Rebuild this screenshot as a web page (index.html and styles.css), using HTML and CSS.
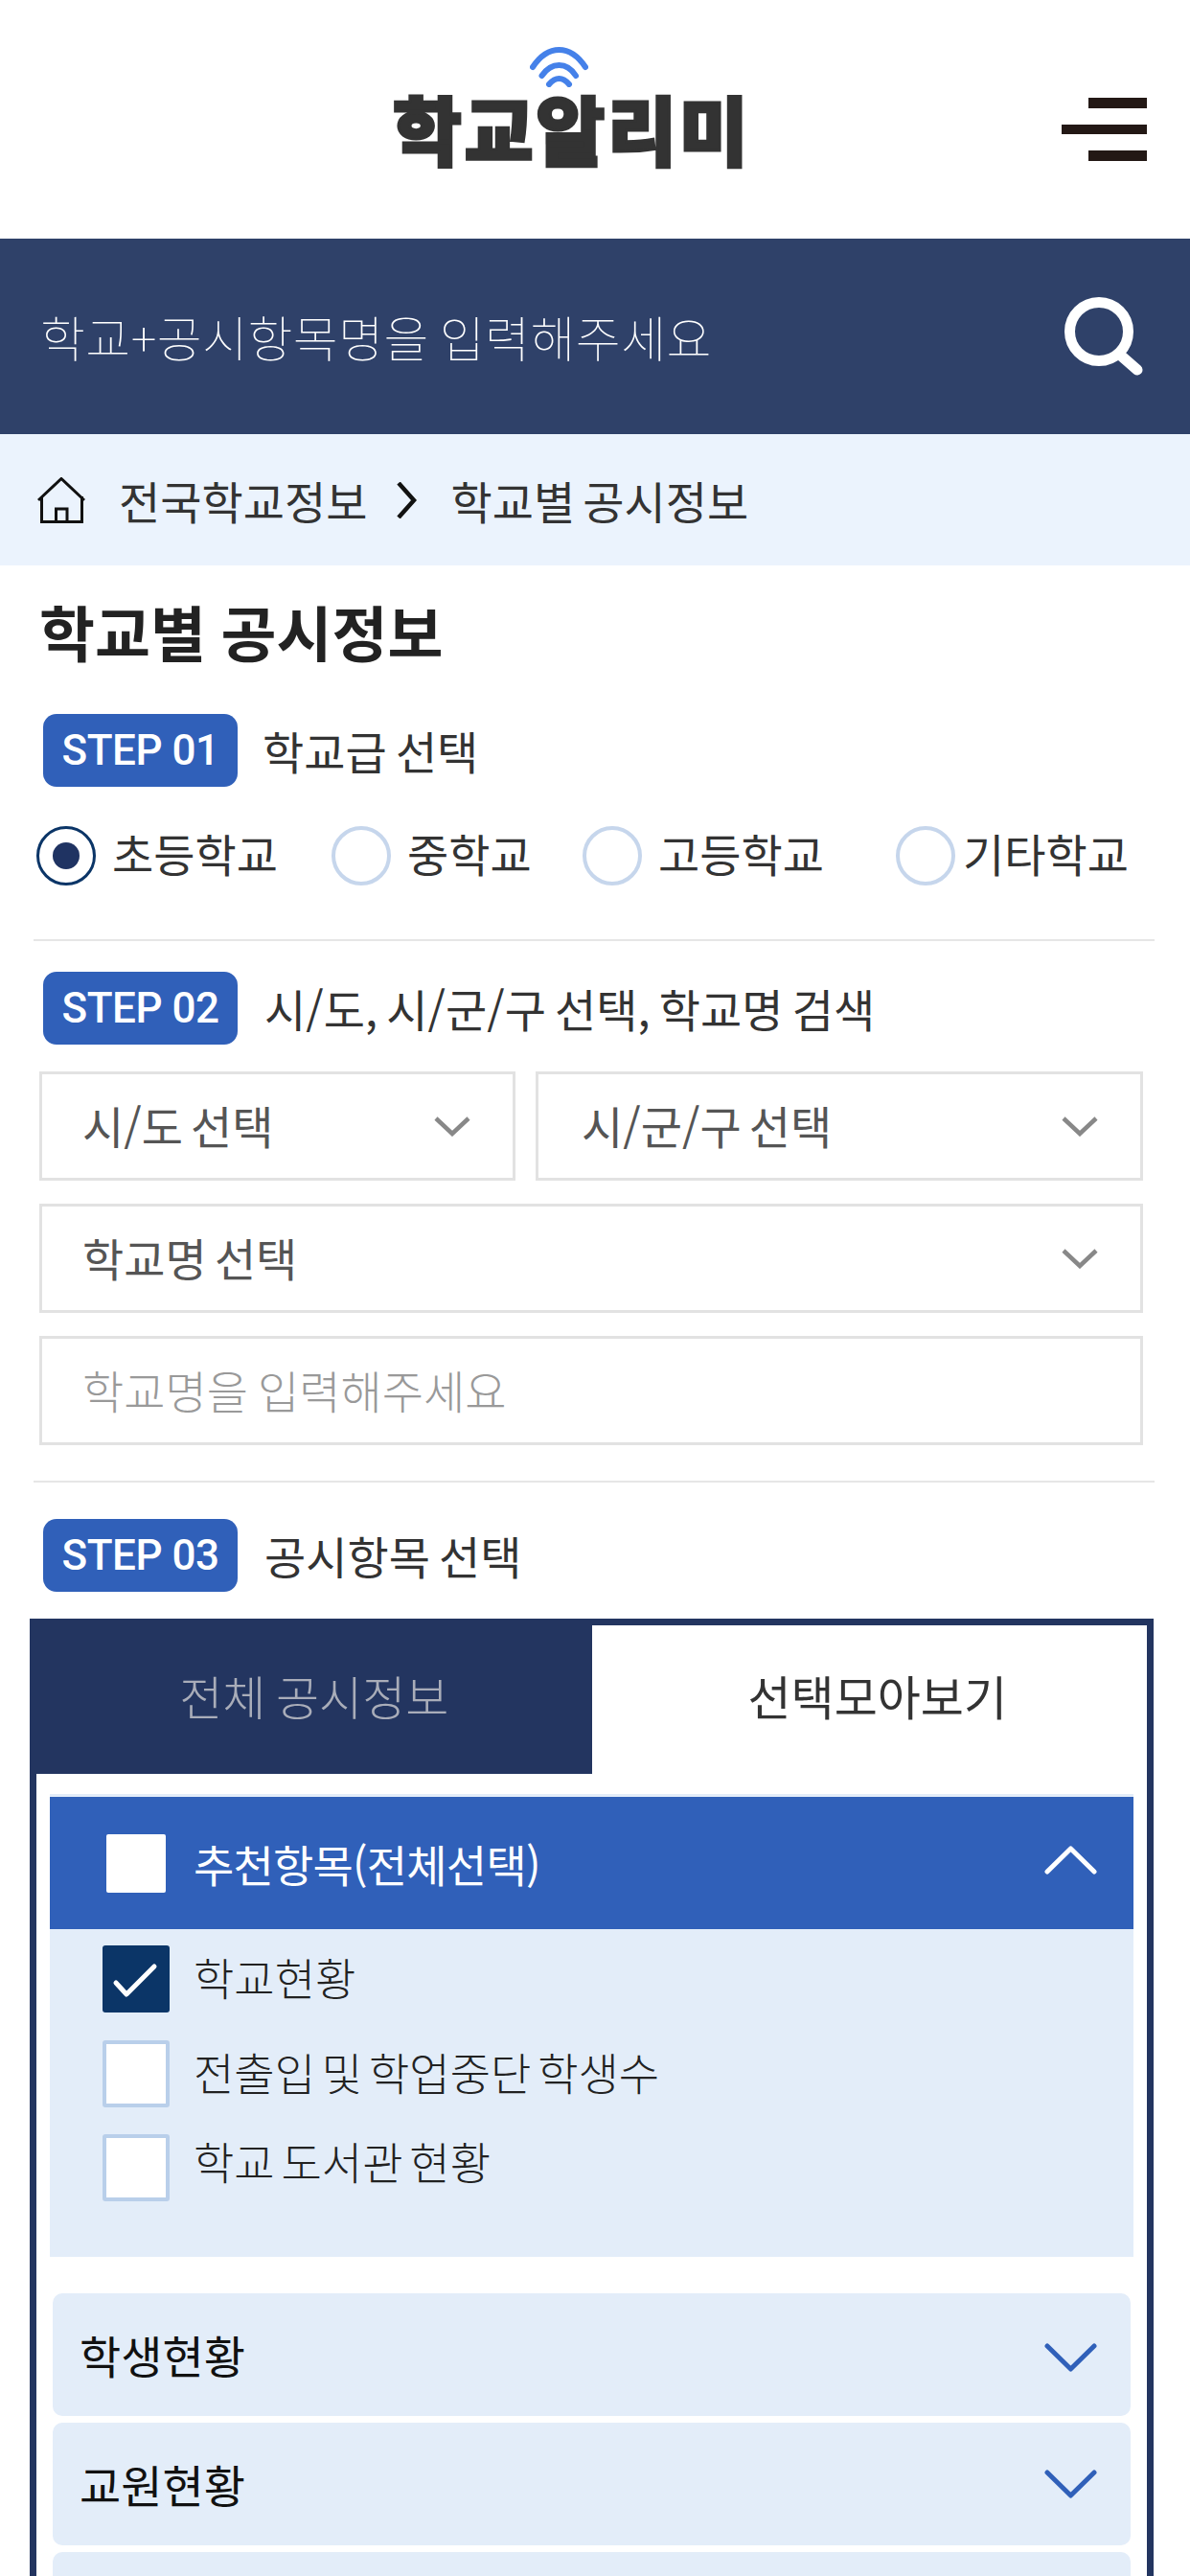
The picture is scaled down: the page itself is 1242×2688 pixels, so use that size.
FILE: index.html
```html
<!DOCTYPE html>
<html lang="ko">
<head>
<meta charset="utf-8">
<title>학교알리미</title>
<link rel="stylesheet" href="styles.css">
</head>
<body>
<div class="page">
  <header class="header">
    <div class="logo">
      <svg class="wifi" width="61" height="42" viewBox="0 0 61 42" fill="none" stroke="#4581e9" stroke-width="6" stroke-linecap="round">
        <path d="M3 21Q15 3 30.5 3Q46 3 58 21"/>
        <path d="M12.500 30Q20 19 30.500 19Q41 19 48 30"/>
        <path d="M20 39Q25 33 30.500 33Q36 33 41 39"/>
      </svg>
      <span class="logo-text">학교알리미</span>
    </div>
    <div class="menu"><i class="bar"></i><i class="bar bar-long"></i><i class="bar"></i></div>
  </header>

  <div class="search">
    <span class="search-text">학교+공시항목명을 입력해주세요</span>
    <svg class="search-icon" width="82" height="82" viewBox="0 0 82 82" fill="none" stroke="#fff" stroke-width="11" stroke-linecap="round">
      <circle cx="36" cy="36" r="30.500"/>
      <path d="M60 62L76 76"/>
    </svg>
  </div>

  <nav class="crumbs">
    <svg class="home" width="50" height="48" viewBox="0 0 50 48" fill="none" stroke="#111" stroke-width="3">
      <path d="M1 24L25 1.500L49 24"/>
      <path d="M4.500 20V46.500H46.500V20"/>
      <path d="M19.500 46.500V33H31V46.500"/>
    </svg>
    <span class="crumb">전국학교정보</span>
    <svg class="crumb-sep" width="21" height="38" viewBox="0 0 21 38" fill="none" stroke="#111" stroke-width="4.500">
      <path d="M2 1L18 19L2 37"/>
    </svg>
    <span class="crumb">학교별 공시정보</span>
  </nav>

  <main>
    <h1 class="title">학교별 공시정보</h1>

    <div class="step step-one"><span class="badge">STEP 01</span><span class="step-label">학교급 선택</span></div>
    <div class="radios">
      <label class="radio"><i class="dot dot-on"></i><span>초등학교</span></label>
      <label class="radio"><i class="dot"></i><span>중학교</span></label>
      <label class="radio"><i class="dot"></i><span>고등학교</span></label>
      <label class="radio radio-tight"><i class="dot"></i><span>기타학교</span></label>
    </div>
    <hr class="rule rule-one">

    <div class="step step-two"><span class="badge">STEP 02</span><span class="step-label">시/도, 시/군/구 선택, 학교명 검색</span></div>
    <div class="fields">
      <div class="field-row">
        <div class="field field-a"><span>시/도 선택</span><svg width="38" height="21" viewBox="0 0 38 21" fill="none" stroke="#888" stroke-width="4.500"><path d="M2 2L19 18L36 2"/></svg></div>
        <div class="field field-b"><span>시/군/구 선택</span><svg width="38" height="21" viewBox="0 0 38 21" fill="none" stroke="#888" stroke-width="4.500"><path d="M2 2L19 18L36 2"/></svg></div>
      </div>
      <div class="field field-c"><span>학교명 선택</span><svg width="38" height="21" viewBox="0 0 38 21" fill="none" stroke="#888" stroke-width="4.500"><path d="M2 2L19 18L36 2"/></svg></div>
      <div class="field field-input"><span>학교명을 입력해주세요</span></div>
    </div>
    <hr class="rule rule-two">

    <div class="step step-three"><span class="badge">STEP 03</span><span class="step-label">공시항목 선택</span></div>

    <section class="box">
      <div class="tabs">
        <div class="tab tab-off">전체 공시정보</div>
        <div class="tab tab-on">선택모아보기</div>
      </div>
      <div class="panel">
        <div class="panel-head">
          <i class="head-check"></i>
          <span class="head-text">추천항목(전체선택)</span>
          <svg class="chev" width="55" height="31" viewBox="0 0 55 31" fill="none" stroke="#fff" stroke-width="5" stroke-linecap="round" stroke-linejoin="round"><path d="M3 28L27.500 4L52 28"/></svg>
        </div>
        <ul class="checks">
          <li class="check-row"><i class="check check-on"><svg width="62" height="62" viewBox="0 0 62 62" fill="none" stroke="#fff" stroke-width="5" stroke-linecap="round" stroke-linejoin="round"><path d="M10 35L21 47L50 18"/></svg></i><span>학교현황</span></li>
          <li class="check-row"><i class="check"></i><span>전출입 및 학업중단 학생수</span></li>
          <li class="check-row check-last"><i class="check"></i><span>학교 도서관 현황</span></li>
        </ul>
      </div>
      <div class="items">
        <div class="item"><span>학생현황</span><svg class="chev" width="55" height="31" viewBox="0 0 55 31" fill="none" stroke="#3060b9" stroke-width="5" stroke-linecap="round" stroke-linejoin="round"><path d="M3 3L27.500 27L52 3"/></svg></div>
        <div class="item"><span>교원현황</span><svg class="chev" width="55" height="31" viewBox="0 0 55 31" fill="none" stroke="#3060b9" stroke-width="5" stroke-linecap="round" stroke-linejoin="round"><path d="M3 3L27.500 27L52 3"/></svg></div>
        <div class="item"></div>
      </div>
    </section>
  </main>
</div>
</body>
</html>
```

FILE: styles.css
```css
* { box-sizing: border-box; }
html, body { margin: 0; padding: 0; background: #fff; }
body {
  font-family: "Noto Sans CJK KR", "Roboto", "Noto Sans", sans-serif;
  color: #333;
}
i { display: block; font-style: normal; }
.page { width: 1242px; height: 2688px; overflow: hidden; }

/* header */
.header { height: 249px; display: flex; padding: 49px 45px 0 410px; justify-content: space-between; }
.logo { width: 366px; display: flex; flex-direction: column; }
.wifi { margin-left: 143px; flex: none; }
.logo-text {
  font-size: 78px; font-weight: 900; line-height: 80px; height: 80px; margin-top: 2px;
  color: #333; letter-spacing: 3px; white-space: nowrap; -webkit-text-stroke: 3px #333;
}
.menu { width: 89px; margin-top: 53px; display: flex; flex-direction: column; align-items: flex-end; gap: 17px; }
.bar { width: 61px; height: 10.500px; background: #231815; }
.bar-long { width: 89px; }

/* search */
.search { height: 204px; background: #2f4169; display: flex; align-items: center; justify-content: space-between; padding: 0 49px 0 42px; }
.search-text { font-size: 51px; font-weight: 100; color: #fff; word-spacing: -4px; letter-spacing: 0.450px; }

/* breadcrumb */
.crumbs { height: 137px; background: #ebf3fd; display: flex; align-items: center; padding-left: 39px; }
.crumb { font-size: 47px; color: #333; word-spacing: -5px; }
.home { margin-right: 35px; }
.crumb-sep { margin: 0 35px 0 31px; }

/* main */
.title { margin: 23px 0 0 41px; font-size: 63px; line-height: 90px; font-weight: 700; color: #222; word-spacing: -2px; }
.step { display: flex; align-items: center; margin-left: 45px; height: 76px; }
.badge {
  width: 203px; height: 100%; background: #3060b9; color: #fff; border-radius: 14px;
  font-family: "Roboto", sans-serif; font-weight: 500; font-size: 44px; letter-spacing: -0.500px;
  display: flex; align-items: center; justify-content: center;
}
.step-label { font-size: 47px; line-height: 60px; color: #333; margin-left: 28px; white-space: nowrap; word-spacing: -4px; }
.step-one { margin-top: 42px; }
.step-one .step-label { margin-left: 26px; }
.step-two { margin-top: 32px; }
.step-three { margin-top: 38px; }

.radios { display: grid; grid-template-columns: 308px 262px 327px auto; height: 62px; margin: 38px 0 0 38px; }
.radio { display: flex; align-items: center; gap: 17px; font-size: 47px; line-height: 62px; color: #333; }
.radio span { padding-bottom: 5px; }
.radio-tight { gap: 8px; }
.dot { width: 62px; height: 62px; border-radius: 50%; border: 4px solid #c6d6ec; background: #fff; flex: none; }
.dot-on { border-color: #0b3567; border-width: 3px; position: relative; }
.dot-on::after { content: ""; position: absolute; left: 14px; top: 14px; width: 28px; height: 28px; border-radius: 50%; background: #1f3362; }

.rule { height: 2px; border: 0; background: #e6e6e6; margin: 0 37px 0 35px; }
.rule-one { margin-top: 59px; }
.rule-two { margin-top: 37px; }

/* fields */
.fields { margin: 28px 49px 0 41px; display: flex; flex-direction: column; gap: 24px; }
.field-row { display: flex; justify-content: space-between; }
.field {
  height: 114px; border: 3px solid #e2e2e2; display: flex; align-items: center; justify-content: space-between;
  padding: 0 44px 0 42px; font-size: 47px; line-height: 60px; color: #555; background: #fff; word-spacing: -5px;
}
.field span { padding-bottom: 3px; }
.field-a { width: 497px; }
.field-b { width: 634px; padding-left: 45px; }
.field-input { font-weight: 300; color: #999; word-spacing: -3px; }
.field svg { flex: none; }

/* tab box */
.box { width: 1173px; margin: 28px 0 0 31px; border: 7px solid #233560; border-bottom: 0; background: #fff; }
.tabs { display: grid; grid-template-columns: 1fr 1fr; height: 155px; }
.tab { display: flex; align-items: center; justify-content: center; font-size: 49px; line-height: 60px; padding-bottom: 10px; }
.tab-off { background: #233560; color: #a9adb9; font-weight: 300; word-spacing: -3px; }
.tab-on { background: #fff; color: #333; padding-left: 17px; }

.panel { margin: 21px 14px 0; background: #e3edf9; height: 483px; padding-top: 3px; }
.panel-head { height: 138px; background: #3060b9; display: flex; align-items: center; padding: 0 38px 0 59px; color: #fff; }
.head-check { width: 62px; height: 61px; background: #fff; border-radius: 2px; flex: none; }
.head-text { font-size: 46px; line-height: 60px; margin-left: 29px; flex: 1; letter-spacing: -0.800px; }
.panel-head .chev { margin-bottom: 8px; }

.checks { list-style: none; margin: 17px 0 0; padding: 0 0 0 55px; display: flex; flex-direction: column; gap: 28.500px; }
.check-row { display: flex; align-items: center; gap: 25px; font-size: 46px; line-height: 60px; font-weight: 300; color: #222; height: 70px; word-spacing: -6px; }
.check-row span { margin-bottom: 6px; }
.check-last span { margin-bottom: 16px; }
.check { width: 70px; height: 70px; border: 4px solid #b9cfea; border-radius: 3px; background: #fff; flex: none; }
.check-on { background: #0b3567; border-color: #0b3567; }
.check-on svg { display: block; }

.items { margin: 38px 17px 0; display: flex; flex-direction: column; gap: 7px; }
.item {
  height: 128px; background: #e3edf9; border-radius: 10px; display: flex; align-items: center; justify-content: space-between;
  padding: 0 35px 0 28px; font-size: 47px; line-height: 60px; color: #111;
}
.item:first-child .chev { margin-top: 6px; }
```
